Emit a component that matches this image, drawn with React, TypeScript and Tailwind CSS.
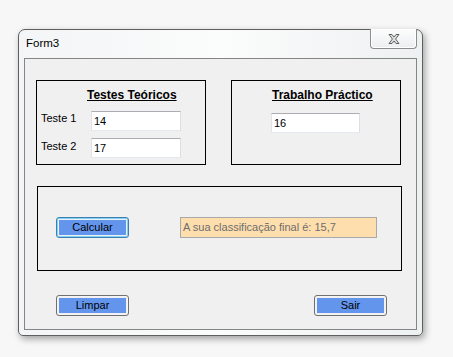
import React from "react";

const font = { fontFamily: '"Liberation Sans", Arial, sans-serif' };

function TextBox({ value, w }: { value: string; w: string }) {
  return (
    <div
      className={`${w} h-[20px] bg-white border border-[#abadb3] border-l-[#e2e3ea] border-r-[#dbdfe6] border-b-[#e3e9ef] flex items-center pl-[2px] text-[11px] text-black`}
    >
      {value}
    </div>
  );
}

function Btn({ label, focused }: { label: string; focused?: boolean }) {
  return (
    <div
      className={`w-[73px] h-[21px] rounded-[3px] border ${
        focused ? "border-[#3c7fb1] shadow-[inset_0_0_0_1px_#7fd2f6]" : "border-[#707070] shadow-[inset_0_0_0_1px_#f4f4f4]"
      } p-[2px] flex`}
    >
      <div className="flex-1 bg-[#6495ed] flex items-center justify-center text-[11px] text-black leading-none">
        {label}
      </div>
    </div>
  );
}

export default function App() {
  return (
    <div className="w-[453px] h-[357px] bg-[#f7f7f7] pt-[29px] pl-[18px]" style={font}>
      <div className="relative w-[405px] h-[307px] rounded-t-[7px] rounded-b-[5px] border border-[#5f5f5f] bg-gradient-to-r from-[#f3f5f6] via-[#fbfcfc] to-[#eef1f2] shadow-[2px_3px_7px_rgba(0,0,0,0.35)] px-[5px] flex flex-col">
        {/* title bar */}
        <div className="h-[28px] flex items-center pl-[2px] text-[11.5px] text-black">Form3</div>
        {/* close button */}
        <div className="absolute top-[-1px] right-[5px] w-[47px] h-[20px] rounded-b-[4px] border border-[#8c8c8c] border-t-0 bg-gradient-to-b from-[#fdfdfd] to-[#eceef0] flex items-center justify-center shadow-[inset_0_0_0_1px_#ffffff]">
          <svg width="12" height="10" viewBox="0 0 12 10">
            <path
              d="M1 0.5 H4 L6 3 L8 0.5 H11 L7.6 5 L11 9.5 H8 L6 7 L4 9.5 H1 L4.4 5 Z"
              fill="#dcdcdc"
              stroke="#555"
              strokeWidth="0.9"
              strokeLinejoin="round"
            />
          </svg>
        </div>
        {/* client area */}
        <div className="w-[393px] h-[272px] border border-[#858585] bg-[#f0f0f0] pt-[21px] pl-[11px] flex flex-col">
          <div className="flex gap-[25px]">
            {/* group 1 */}
            <div className="w-[170px] h-[85px] border border-black flex flex-col">
              <div className="pl-[50px] pt-[6px] h-[22px] text-[12px] font-bold underline leading-[16px] text-black">
                Testes Teóricos
              </div>
              <div className="mt-[7px] flex items-center">
                <div className="w-[54px] pl-[4px] mb-[5px] text-[11px] text-black">Teste 1</div>
                <TextBox value="14" w="w-[90px]" />
              </div>
              <div className="mt-[6px] flex items-center">
                <div className="w-[54px] pl-[4px] mb-[5px] text-[11px] text-black">Teste 2</div>
                <TextBox value="17" w="w-[90px]" />
              </div>
            </div>
            {/* group 2 */}
            <div className="w-[170px] h-[85px] border border-black flex flex-col">
              <div className="pl-[40px] pt-[6px] h-[22px] text-[12px] font-bold underline leading-[16px] text-black">
                Trabalho Práctico
              </div>
              <div className="mt-[10px] pl-[39px] flex">
                <TextBox value="16" w="w-[89px]" />
              </div>
            </div>
          </div>
          {/* group 3 */}
          <div className="mt-[21px] ml-[1px] w-[365px] h-[85px] border border-black flex items-center pl-[18px] pb-[2px]">
            <Btn label="Calcular" focused />
            <div className="ml-[51px] w-[197px] h-[21px] border border-[#a9a9a9] bg-[#ffdead] flex items-center pl-[2px] text-[11px] text-[#6d6d6d]">
              A sua classificação final é: 15,7
            </div>
          </div>
          {/* bottom buttons */}
          <div className="mt-[24px] pl-[20px] flex gap-[185px]">
            <Btn label="Limpar" />
            <Btn label="Sair" />
          </div>
        </div>
      </div>
    </div>
  );
}
